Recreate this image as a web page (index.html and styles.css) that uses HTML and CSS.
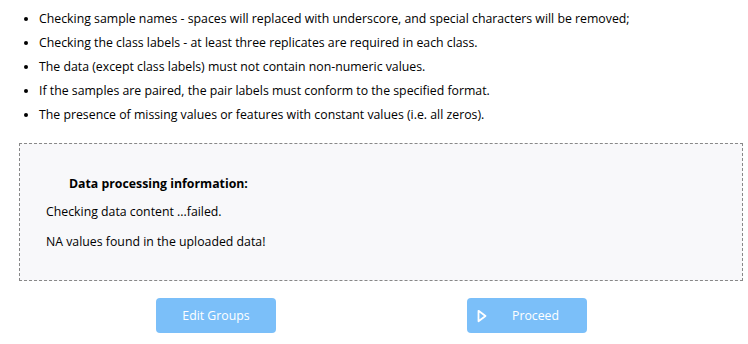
FILE: index.html
```html
<!DOCTYPE html>
<html lang="en">
<head>
  <meta charset="UTF-8" />
  <meta name="viewport" content="width=device-width, initial-scale=1.0"/>
  <title>Data Check</title>
  <link rel="stylesheet" href="styles.css">
</head>
<body>
  <div class="page">
    <ul class="checks">
      <li>Checking sample names - spaces will replaced with underscore, and special characters will be removed;</li>
      <li>Checking the class labels - at least three replicates are required in each class.</li>
      <li>The data (except class labels) must not contain non-numeric values.</li>
      <li>If the samples are paired, the pair labels must conform to the specified format.</li>
      <li>The presence of missing values or features with constant values (i.e. all zeros).</li>
    </ul>

    <section class="info-box">
      <h5>Data processing information:</h5>
      <p>Checking data content ...failed.</p>
      <p>NA values found in the uploaded data!</p>
    </section>

    <div class="actions">
      <button class="btn" disabled>Edit Groups</button>
      <button class="btn btn-proceed" disabled>
        <svg class="play" width="10" height="14" viewBox="0 0 10 14">
          <path d="M1.5 1.8 L8.5 7 L1.5 12.2 Z" fill="none" stroke="#fff" stroke-width="1.8" stroke-linejoin="round"/>
        </svg>
        <span>Proceed</span>
      </button>
    </div>
  </div>
</body>
</html>
```

FILE: styles.css
```css
* {
  box-sizing: border-box;
  margin: 0;
  padding: 0;
}

body {
  font-family: "Open Sans", "Noto Sans", sans-serif;
  font-size: 12.3px;
  color: #000;
  background: #fff;
}

.page {
  padding: 7px 5px 0 19px;
}

.checks {
  padding-left: 20px;
  list-style: disc;
}

.checks li {
  line-height: 24px;
}

.info-box {
  margin-top: 16px;
  height: 138px;
  border: 1px dashed #888;
  background: #f8f8fa;
  padding: 31px 26px 0 26px;
}

.info-box h5 {
  font-size: 12.3px;
  font-weight: bold;
  padding-left: 23px;
  margin-bottom: 11px;
}

.info-box p {
  margin-bottom: 13px;
}

.actions {
  display: flex;
  gap: 191px;
  padding: 17px 0 0 137px;
}

.btn {
  width: 120px;
  height: 35px;
  border: none;
  border-radius: 4px;
  background: #7bbff9;
  color: #fff;
  font-family: inherit;
  font-size: 12.3px;
  display: flex;
  align-items: center;
  justify-content: center;
}

.btn-proceed {
  justify-content: flex-start;
  padding-left: 10px;
}

.btn-proceed span {
  margin-left: 25px;
}
```
